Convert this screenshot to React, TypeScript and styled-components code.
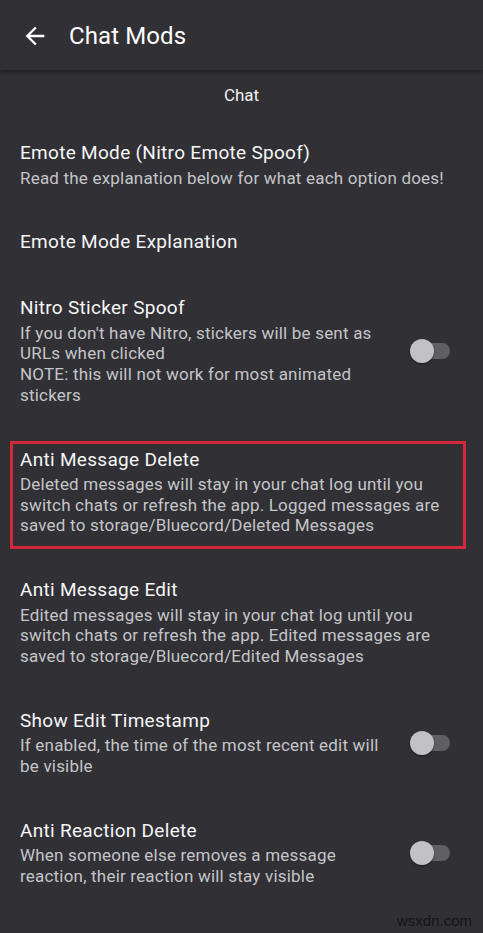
import React from "react";
import styled, { createGlobalStyle } from "styled-components";

const Global = createGlobalStyle`
  html, body { margin: 0; padding: 0; background: #303035; }
  body { font-family: Roboto, "Noto Sans", Arial, sans-serif; -webkit-font-smoothing: antialiased; }
  * { box-sizing: border-box; }
`;

const Screen = styled.div`
  width: 483px;
  height: 933px;
  overflow: hidden;
  position: relative;
  background: #303035;
  color: #f4f4f5;
`;

const Header = styled.header`
  height: 70px;
  display: flex;
  align-items: center;
  padding-top: 1px;
  background: #303035;
  box-shadow: 0 2px 4px rgba(0, 0, 0, 0.35);
  position: relative;
  z-index: 1;
`;

const BackButton = styled.button`
  width: 28px;
  height: 28px;
  margin-left: 21px;
  padding: 0;
  border: none;
  background: transparent;
  color: #ffffff;
  display: flex;
  align-items: center;
  justify-content: center;
`;

const Title = styled.h1`
  margin: 0 0 0 20px;
  font-size: 24px;
  font-weight: 400;
  color: #ffffff;
  letter-spacing: 0.1px;
`;

const SectionTitle = styled.div`
  padding: 14px 0 14px;
  line-height: 22px;
  font-size: 17px;
  text-align: center;
  color: #f2f2f3;
`;

const Row = styled.div`
  position: relative;
  display: flex;
  align-items: center;
  padding: 21px 33px 21px 20px;
`;

const Texts = styled.div<{ $narrow?: boolean }>`
  flex: 1;
  min-width: 0;
  padding-right: ${(p) => (p.$narrow ? "14px" : "0")};
`;

const RowTitle = styled.div`
  font-size: 19px;
  line-height: 24px;
  letter-spacing: 0.3px;
  color: #f6f6f7;
`;

const RowDesc = styled.div`
  margin-top: 2.5px;
  font-size: 17px;
  line-height: 20.7px;
  letter-spacing: 0.2px;
  color: #c5c5c8;
`;

const Highlight = styled.div`
  position: absolute;
  left: 10px;
  right: 17px;
  top: 14px;
  bottom: 8px;
  border: 3px solid #d3283a;
  pointer-events: none;
`;

const Switch = styled.div`
  position: relative;
  width: 40px;
  height: 24px;
  flex: none;
`;

const Track = styled.div`
  position: absolute;
  left: 3px;
  right: 0;
  top: 4px;
  height: 16px;
  border-radius: 8px;
  background: #5f5f63;
`;

const Thumb = styled.div`
  position: absolute;
  left: 0;
  top: 0;
  width: 24px;
  height: 24px;
  border-radius: 50%;
  background: #c2c2c4;
  box-shadow: 0 1px 2px rgba(0, 0, 0, 0.45);
`;

const Watermark = styled.div`
  position: absolute;
  right: 11px;
  bottom: 4px;
  font-family: "Liberation Sans", Arial, sans-serif;
  font-size: 15px;
  color: #141416;
`;

type Item = { title: string; desc?: string[]; toggle?: boolean; highlight?: boolean };

const items: Item[] = [
  { title: "Emote Mode (Nitro Emote Spoof)", desc: ["Read the explanation below for what each option does!"] },
  { title: "Emote Mode Explanation" },
  {
    title: "Nitro Sticker Spoof",
    desc: [
      "If you don't have Nitro, stickers will be sent as URLs when clicked",
      "NOTE: this will not work for most animated stickers",
    ],
    toggle: true,
  },
  {
    title: "Anti Message Delete",
    desc: [
      "Deleted messages will stay in your chat log until you switch chats or refresh the app. Logged messages are saved to storage/Bluecord/Deleted Messages",
    ],
    highlight: true,
  },
  {
    title: "Anti Message Edit",
    desc: [
      "Edited messages will stay in your chat log until you switch chats or refresh the app. Edited messages are saved to storage/Bluecord/Edited Messages",
    ],
  },
  {
    title: "Show Edit Timestamp",
    desc: ["If enabled, the time of the most recent edit will be visible"],
    toggle: true,
  },
  {
    title: "Anti Reaction Delete",
    desc: ["When someone else removes a message reaction, their reaction will stay visible"],
    toggle: true,
  },
];

export default function App() {
  return (
    <Screen>
      <Global />
      <Header>
        <BackButton aria-label="Back">
          <svg width="28" height="28" viewBox="0 0 24 24" fill="currentColor">
            <path d="M20 11H7.83l5.59-5.59L12 4l-8 8 8 8 1.41-1.41L7.83 13H20v-2z" />
          </svg>
        </BackButton>
        <Title>Chat Mods</Title>
      </Header>
      <SectionTitle>Chat</SectionTitle>
      {items.map((it) => (
        <Row key={it.title}>
          <Texts $narrow={it.toggle}>
            <RowTitle>{it.title}</RowTitle>
            {it.desc && (
              <RowDesc>
                {it.desc.map((line, i) => (
                  <div key={i}>{line}</div>
                ))}
              </RowDesc>
            )}
          </Texts>
          {it.toggle && (
            <Switch>
              <Track />
              <Thumb />
            </Switch>
          )}
          {it.highlight && <Highlight />}
        </Row>
      ))}
      <Watermark>wsxdn.com</Watermark>
    </Screen>
  );
}
